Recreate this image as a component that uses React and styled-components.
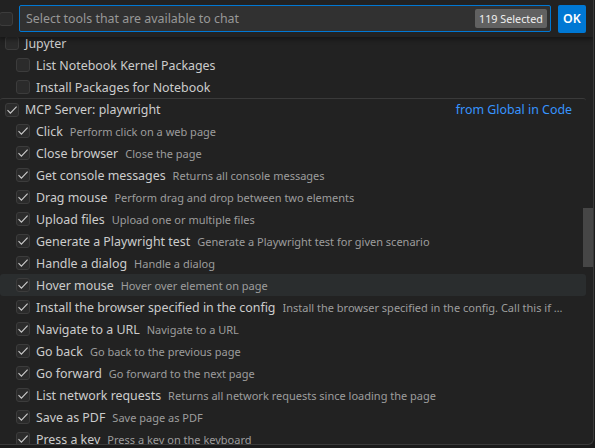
import React from 'react'
import styled, { createGlobalStyle } from 'styled-components'

const GlobalStyle = createGlobalStyle`
  html, body {
    margin: 0;
    padding: 0;
    background: #1b1b1b;
    overflow: hidden;
  }
  body {
    font-family: "Noto Sans", "Open Sans", sans-serif;
  }
`

const Panel = styled.div`
  position: relative;
  width: 593px;
  height: 444px;
  background: #222222;
  border-right: 1px solid #3a3a3a;
  border-bottom: 1px solid #3a3a3a;
  border-bottom-right-radius: 6px;
  overflow: hidden;
`

const Header = styled.div`
  display: flex;
  align-items: center;
  gap: 6px;
  height: 37px;
  padding: 0 7px 0 0;
  margin-left: -1px;
  box-sizing: border-box;
  box-shadow: 0 2px 5px rgba(0, 0, 0, 0.45);
  position: relative;
  z-index: 1;
  background: #222222;
`

const Box = styled.span`
  flex: none;
  display: inline-flex;
  align-items: center;
  justify-content: center;
  width: 14px;
  height: 14px;
  box-sizing: border-box;
  border: 1px solid #3c3c3c;
  border-radius: 3px;
  background: #2b2b2b;
`

const Input = styled.div`
  flex: 1;
  display: flex;
  align-items: center;
  height: 27px;
  box-sizing: border-box;
  border: 1px solid #0078d4;
  border-radius: 2px;
  background: #313131;
  padding: 0 3px 0 6px;
`

const Placeholder = styled.span`
  flex: 1;
  color: #989898;
  font-size: 12.4px;
`

const Badge = styled.span`
  background: #616161;
  color: #f0f0f0;
  font-size: 10.8px;
  padding: 2px 4px;
  border-radius: 2px;
  line-height: 15px;
`

const OkButton = styled.button`
  width: 28px;
  height: 28px;
  border: none;
  border-radius: 2px;
  background: #0078d4;
  color: #ffffff;
  font-family: "Noto Sans", sans-serif;
  font-size: 12.4px;
  font-weight: 600;
  padding: 0;
  margin-left: 1px;
`

const List = styled.div`
  display: flex;
  flex-direction: column;
  margin-top: -5px;
`

const Row = styled.div`
  display: flex;
  align-items: center;
  height: 22px;
  box-sizing: border-box;
  padding-left: ${p => p.$indent}px;
  padding-right: 14px;
  margin-right: 7px;
  border-radius: 3px;
  border-top: ${p => (p.$divided ? '1px solid #3a3a3a' : 'none')};
  background: ${p => (p.$active ? '#2a2d2e' : 'transparent')};
  white-space: nowrap;
  overflow: hidden;
`

const Label = styled.span`
  margin-left: 6px;
  color: #cccccc;
  font-size: 12.4px;
  flex: none;
`

const Desc = styled.span`
  margin-left: 7px;
  color: #9d9d9d;
  font-size: 11px;
  overflow: hidden;
  text-overflow: ellipsis;
  flex: 1;
  min-width: 0;
  padding-right: 8px;
`

const Source = styled.span`
  margin-left: auto;
  color: #3794ff;
  font-size: 12.4px;
`

const Scrollbar = styled.div`
  position: absolute;
  right: 0;
  top: 208px;
  width: 10px;
  height: 59px;
  background: #464646;
`

const Check = () => (
  <svg width="12" height="12" viewBox="0 0 12 12">
    <path d="M1.5 6.2 L4.4 9.2 L10.6 2.6" fill="none" stroke="#cccccc" strokeWidth="1.1" />
  </svg>
)

const Item = ({ indent, checked, label, desc, source, active, divided }) => (
  <Row $indent={indent} $active={active} $divided={divided}>
    <Box>{checked && <Check />}</Box>
    <Label>{label}</Label>
    {desc && <Desc>{desc}</Desc>}
    {source && <Source>{source}</Source>}
  </Row>
)

const tools = [
  ['Click', 'Perform click on a web page'],
  ['Close browser', 'Close the page'],
  ['Get console messages', 'Returns all console messages'],
  ['Drag mouse', 'Perform drag and drop between two elements'],
  ['Upload files', 'Upload one or multiple files'],
  ['Generate a Playwright test', 'Generate a Playwright test for given scenario'],
  ['Handle a dialog', 'Handle a dialog'],
  ['Hover mouse', 'Hover over element on page'],
  ['Install the browser specified in the config', 'Install the browser specified in the config. Call this if you get an error about the browser not being installed.'],
  ['Navigate to a URL', 'Navigate to a URL'],
  ['Go back', 'Go back to the previous page'],
  ['Go forward', 'Go forward to the next page'],
  ['List network requests', 'Returns all network requests since loading the page'],
  ['Save as PDF', 'Save page as PDF'],
  ['Press a key', 'Press a key on the keyboard'],
]

export default function App() {
  return (
    <>
      <GlobalStyle />
      <Panel>
        <Header>
          <Box />
          <Input>
            <Placeholder>Select tools that are available to chat</Placeholder>
            <Badge>119 Selected</Badge>
          </Input>
          <OkButton>OK</OkButton>
        </Header>
        <List>
          <Item indent={5} label="Jupyter" />
          <Item indent={16} label="List Notebook Kernel Packages" />
          <Item indent={16} label="Install Packages for Notebook" />
          <Item indent={5} divided checked label="MCP Server: playwright" source="from Global in Code" />
          {tools.map(([label, desc]) => (
            <Item
              key={label}
              indent={16}
              checked
              label={label}
              desc={desc}
              active={label === 'Hover mouse'}
            />
          ))}
        </List>
        <Scrollbar />
      </Panel>
    </>
  )
}
